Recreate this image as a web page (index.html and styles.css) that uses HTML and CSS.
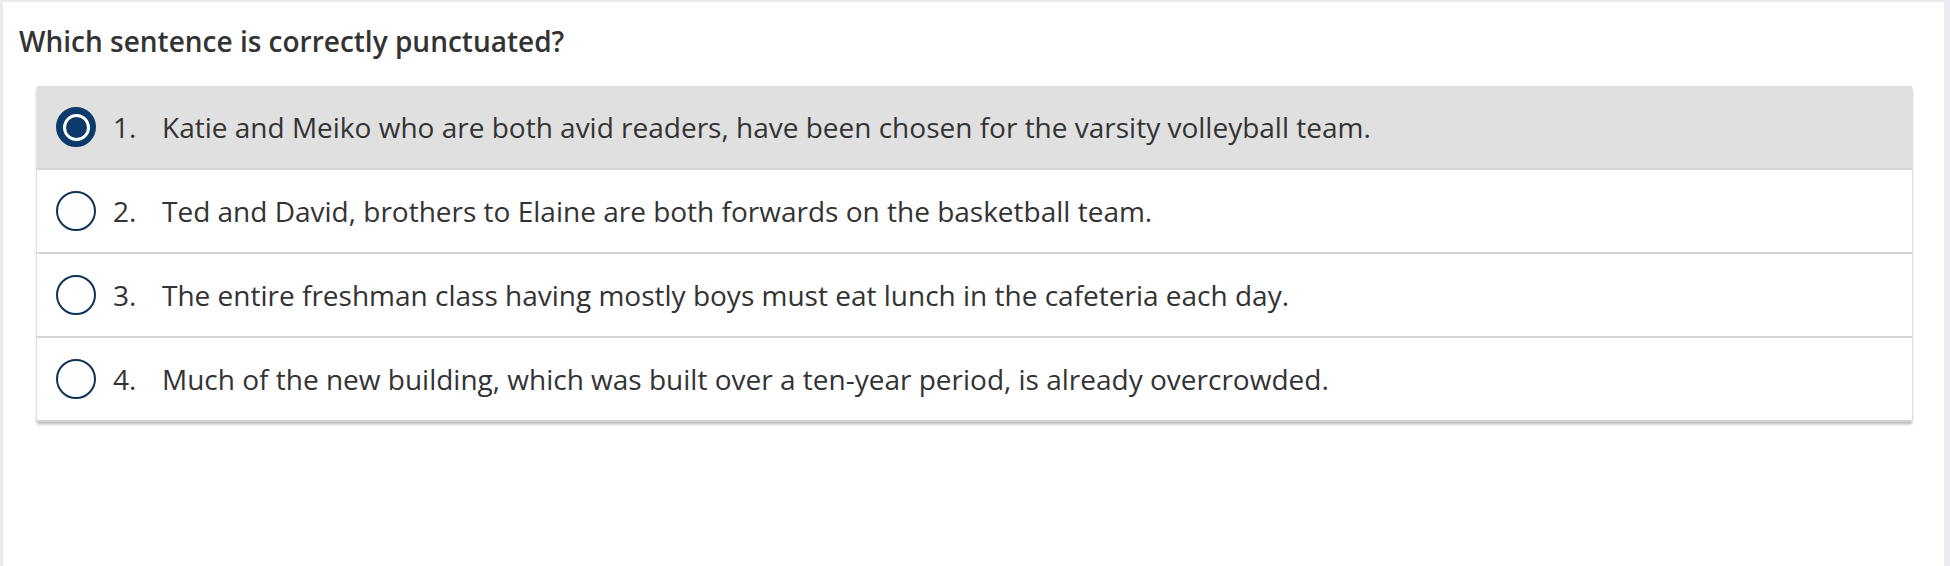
FILE: index.html
```html
<!DOCTYPE html>
<html>
<head>
<meta charset="utf-8">
<link rel="stylesheet" href="styles.css">
</head>
<body>
<div class="panel">
  <h1 class="question">Which sentence is correctly punctuated?</h1>
  <div class="choices">
    <div class="choice selected">
      <span class="radio"><span class="dot"></span></span>
      <span class="num">1.</span>
      <span class="text">Katie and Meiko who are both avid readers, have been chosen for the varsity volleyball team.</span>
    </div>
    <div class="choice">
      <span class="radio"></span>
      <span class="num">2.</span>
      <span class="text">Ted and David, brothers to Elaine are both forwards on the basketball team.</span>
    </div>
    <div class="choice">
      <span class="radio"></span>
      <span class="num">3.</span>
      <span class="text">The entire freshman class having mostly boys must eat lunch in the cafeteria each day.</span>
    </div>
    <div class="choice">
      <span class="radio"></span>
      <span class="num">4.</span>
      <span class="text">Much of the new building, which was built over a ten-year period, is already overcrowded.</span>
    </div>
  </div>
</div>
</body>
</html>
```
FILE: styles.css
```css
html, body {
  margin: 0;
  padding: 0;
  height: 100%;
}
body {
  background: #eaeaef;
  font-family: "Open Sans", "Noto Sans", sans-serif;
  color: #333;
  overflow: hidden;
}
.panel {
  background: #ffffff;
  margin: 2px 6px 0 3px;
  min-height: 564px;
  padding: 20px 32px 0 34px;
  box-sizing: border-box;
}
.question {
  margin: 0 0 0 -18px;
  font-size: 28px;
  font-weight: 600;
  line-height: 38px;
  color: #333;
}
.choices {
  margin-top: 26px;
  background: #fff;
  box-shadow: 0 2px 3px rgba(0,0,0,0.3);
}
.choice {
  display: flex;
  align-items: center;
  height: 82px;
  border-bottom: 2px solid #d3d3d3;
  padding-left: 19px;
  font-size: 28px;
}
.choice.selected {
  background: #e0e0e0;
}
.radio {
  width: 40px;
  height: 40px;
  box-sizing: border-box;
  border: 2px solid #0f3358;
  border-radius: 50%;
  flex: none;
  display: flex;
  align-items: center;
  justify-content: center;
}
.selected .radio {
  background: #0b3a6b;
  border-color: #0b3a6b;
}
.dot {
  width: 27px;
  height: 27px;
  box-sizing: border-box;
  border: 3px solid #fff;
  border-radius: 50%;
  background: #0b3a6b;
}
.num {
  margin-left: 17px;
  width: 49px;
  flex: none;
}
.text {
  white-space: nowrap;
}
```
